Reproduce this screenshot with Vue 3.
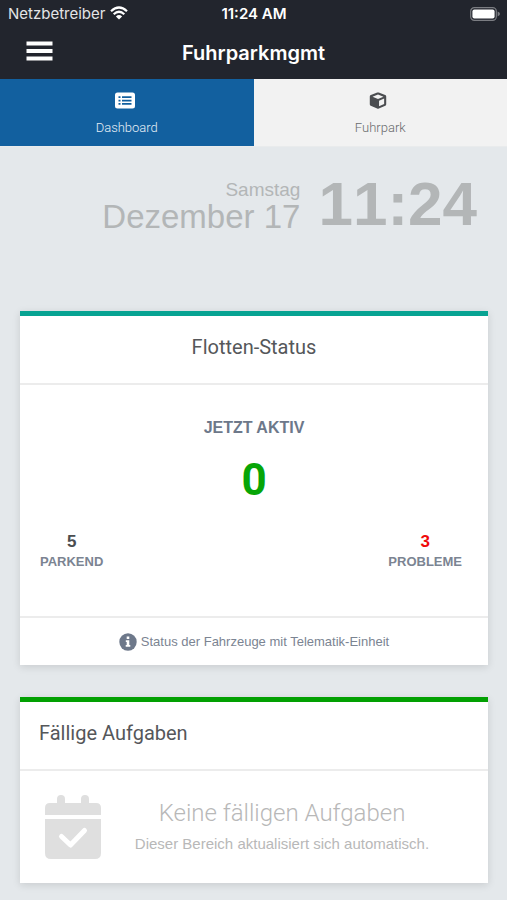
<template>
  <div class="app">
    <header class="top">
      <div class="status-bar">
        <div class="carrier">
          <span>Netzbetreiber</span>
          <svg class="wifi" viewBox="0 0 18 14" aria-hidden="true">
            <path d="M1 5.2Q9-2.2 17 5.2" />
            <path d="M3.7 8.2Q9 3.3 14.3 8.2" />
            <path class="dot" d="M5.9 10.4Q9 7.8 12.1 10.4L9 13.6Z" />
          </svg>
        </div>
        <span class="status-time">11:24 AM</span>
        <svg class="battery" viewBox="0 0 30 14" aria-hidden="true">
          <rect class="shell" x="0.7" y="0.7" width="25.6" height="12.6" rx="3.6" />
          <rect class="charge" x="2.4" y="2.4" width="22.2" height="9.2" rx="2" />
          <path class="tip" d="M27.6 4.6Q30 5.6 30 7T27.6 9.4Z" />
        </svg>
      </div>
      <div class="title-bar">
        <button class="menu" type="button" aria-label="Menü">
          <svg viewBox="0 0 26 20" aria-hidden="true">
            <path d="M0 0.500h26v4H0zM0 8h26v4H0zM0 15.500h26v4H0z" />
          </svg>
        </button>
        <h1>Fuhrparkmgmt</h1>
      </div>
    </header>

    <nav class="tabs">
      <a
        v-for="tab in tabs"
        :key="tab.id"
        href="#"
        class="tab"
        :class="{ active: tab.id === activeTab }"
        @click.prevent="activeTab = tab.id"
      >
        <svg v-if="tab.id === 'dashboard'" viewBox="0 0 20 16" aria-hidden="true">
          <path
            fill-rule="evenodd"
            d="M2.500 0h15Q20 0 20 2.500v11Q20 16 17.500 16h-15Q0 16 0 13.500v-11Q0 0 2.500 0zM3.500 3.800v1.700h2V3.800zM7 3.800v1.700h9.500V3.800zM3.500 7.200v1.700h2V7.200zM7 7.200v1.700h9.500V7.200zM3.500 10.600v1.700h2v-1.700zM7 10.600v1.700h9.500v-1.700z"
          />
        </svg>
        <svg v-else viewBox="0 0 18 18" aria-hidden="true">
          <path
            fill-rule="evenodd"
            d="M8.200 0.600Q9 0.300 9.800 0.600L16.600 3.100Q17.700 3.500 17.700 4.700V12.900Q17.700 14 16.700 14.500L9.900 17.500Q9 17.900 8.100 17.500L1.300 14.500Q0.300 14 0.300 12.900V4.700Q0.300 3.500 1.400 3.100ZM9 2.700L3.200 4.900L9 7.300L14.800 4.900ZM10.100 9.200V15L15.500 12.600V7Z"
          />
        </svg>
        <span>{{ tab.label }}</span>
      </a>
    </nav>

    <main>
      <div class="clock">
        <div class="date">
          <span class="weekday">Samstag</span>
          <span class="day">Dezember 17</span>
        </div>
        <time>11:24</time>
      </div>

      <section class="card fleet">
        <h2>Flotten-Status</h2>
        <div class="fleet-body">
          <h3>JETZT AKTIV</h3>
          <strong class="active-count">0</strong>
          <div class="counts">
            <div v-for="item in counts" :key="item.label" class="count">
              <strong :class="{ problem: item.problem }">{{ item.value }}</strong>
              <span>{{ item.label }}</span>
            </div>
          </div>
        </div>
        <footer>
          <svg viewBox="0 0 18 18" aria-hidden="true">
            <circle cx="9" cy="9" r="8.700" />
            <path d="M7.700 3.600h2.600v2.500H7.700zM6.800 7.300h3.500v4.800h1v1.700H6.700v-1.700h1V9h-0.900z" />
          </svg>
          <span>Status der Fahrzeuge mit Telematik-Einheit</span>
        </footer>
      </section>

      <section class="card tasks">
        <h2>Fällige Aufgaben</h2>
        <div class="tasks-body">
          <svg viewBox="0 0 56 64" aria-hidden="true">
            <path
              d="M0 20v-7Q0 8 5 8h7V4a4 4 0 0 1 8 0v4h16V4a4 4 0 0 1 8 0v4h7Q56 8 56 13v7zM0 24h56v34Q56 64 50 64H6Q0 64 0 58z"
            />
            <path class="check" d="M16.500 41.500L25.500 50L39.500 35.500" />
          </svg>
          <div class="empty">
            <p class="empty-title">Keine fälligen Aufgaben</p>
            <p class="empty-text">Dieser Bereich aktualisiert sich automatisch.</p>
          </div>
        </div>
      </section>
    </main>
  </div>
</template>

<script setup>
import { ref } from "vue";

const activeTab = ref("dashboard");

const tabs = [
  { id: "dashboard", label: "Dashboard" },
  { id: "fleet", label: "Fuhrpark" },
];

const counts = [
  { label: "PARKEND", value: 5, problem: false },
  { label: "PROBLEME", value: 3, problem: true },
];
</script>

<style>
body {
  margin: 0;
  background: #e4e8eb;
}
</style>

<style scoped>
.app {
  min-height: 100vh;
  font-family: "Liberation Sans", Arial, sans-serif;
  background: #e4e8eb;
}

h1,
h2,
h3,
p {
  margin: 0;
}

.top {
  background: #22252d;
  color: #fff;
  font-family: Inter, sans-serif;
}

.status-bar {
  display: grid;
  grid-template-columns: 1fr auto 1fr;
  align-items: center;
  height: 27px;
  padding: 0 7px 0 8px;
  font-size: 15px;
}

.carrier {
  display: flex;
  align-items: center;
  gap: 5px;
  color: #e3e4e6;
}

.wifi {
  width: 18px;
  height: 14px;
  margin-bottom: 2px;
  fill: none;
  stroke: #fff;
  stroke-width: 2.2;
}

.wifi .dot {
  fill: #fff;
  stroke: none;
}

.status-time {
  font-weight: 600;
}

.battery {
  justify-self: end;
  width: 30px;
  height: 14px;
}

.shell {
  fill: none;
  stroke: #7b7d82;
  stroke-width: 1.2;
}

.charge {
  fill: #fff;
}

.tip {
  fill: #7b7d82;
}

.title-bar {
  display: grid;
  grid-template-columns: 1fr auto 1fr;
  align-items: center;
  height: 52px;
}

.menu {
  justify-self: start;
  padding: 0 26px;
  border: 0;
  background: none;
}

.menu svg {
  display: block;
  width: 27px;
  height: 20px;
  margin-bottom: 4px;
  fill: #fff;
}

h1 {
  font-size: 20px;
  font-weight: 600;
}

.tabs {
  display: flex;
  border-bottom: 1px solid #e9ebec;
}

.tab {
  flex: 1;
  display: flex;
  flex-direction: column;
  align-items: center;
  gap: 10px;
  box-sizing: border-box;
  height: 67px;
  padding-top: 13px;
  background: #f2f2f2;
  color: #696b6d;
  font-family: Roboto, sans-serif;
  font-size: 13px;
  font-weight: 300;
  line-height: 18px;
  text-decoration: none;
}

.tab svg {
  width: 20px;
  height: 17px;
  margin-right: 4px;
  fill: #4b4d50;
}

.tab.active {
  background: #12609f;
  color: #e4eef6;
}

.tab.active svg {
  fill: #fff;
}

main {
  padding: 0 19px 18px 20px;
}

.clock {
  display: flex;
  justify-content: flex-end;
  align-items: flex-start;
  gap: 18px;
  height: 136px;
  padding: 28px 11px 0;
  color: #b3b6b7;
}

.date {
  display: flex;
  flex-direction: column;
  align-items: flex-end;
  padding-top: 5px;
}

.weekday {
  font-size: 19px;
  line-height: 20px;
}

.day {
  font-size: 33px;
  line-height: 34px;
}

time {
  font-size: 62px;
  font-weight: 700;
  font-kerning: none;
  line-height: 58px;
}

.card {
  margin-bottom: 32px;
  border-top: 5px solid #07a392;
  background: #fff;
  box-shadow: 0 2px 8px rgba(0, 0, 0, 0.12);
}

.card.tasks {
  margin-bottom: 0;
  border-top-color: #02a002;
}

h2 {
  padding: 17px 19px 22px;
  border-bottom: 2px solid #ececec;
  color: #55575a;
  font-family: Roboto, sans-serif;
  font-size: 20px;
  font-weight: 400;
  line-height: 28px;
}

.fleet h2 {
  text-align: center;
}

.fleet-body {
  display: flex;
  flex-direction: column;
  align-items: center;
  padding: 32px 20px 44px;
}

h3 {
  color: #6d788a;
  font-size: 16px;
  font-weight: 700;
  line-height: 22px;
}

.active-count {
  margin-top: 17px;
  color: #07a507;
  font-family: Roboto, sans-serif;
  font-size: 44px;
  line-height: 48px;
}

.counts {
  display: flex;
  justify-content: space-between;
  align-self: stretch;
  margin-top: 27px;
  padding-right: 6px;
}

.count {
  display: flex;
  flex-direction: column;
  align-items: center;
  color: #7b8492;
  font-size: 13px;
  font-weight: 700;
  line-height: 20px;
}

.count strong {
  color: #4b4d50;
  font-size: 17px;
  line-height: 21px;
}

.count .problem {
  color: #f00a0a;
}

.fleet footer {
  display: flex;
  justify-content: center;
  align-items: center;
  gap: 4px;
  height: 47px;
  border-top: 2px solid #ececec;
  color: #7b8492;
  font-size: 13px;
}

.fleet footer svg {
  width: 18px;
  height: 18px;
  fill: #6d788a;
}

.fleet footer path {
  fill: #fff;
}

.tasks-body {
  display: flex;
  align-items: flex-start;
  padding: 24px 25px;
}

.tasks-body svg {
  flex: none;
  width: 56px;
  height: 64px;
  fill: #dfdfdf;
}

.tasks-body .check {
  fill: none;
  stroke: #fff;
  stroke-width: 5;
  stroke-linecap: round;
  stroke-linejoin: round;
}

.empty {
  flex: 1;
  color: #b8b8b8;
  text-align: center;
}

.empty-title {
  font-family: Roboto, sans-serif;
  font-size: 24px;
  font-weight: 300;
  line-height: 36px;
}

.empty-text {
  font-size: 15px;
  line-height: 26px;
}
</style>
